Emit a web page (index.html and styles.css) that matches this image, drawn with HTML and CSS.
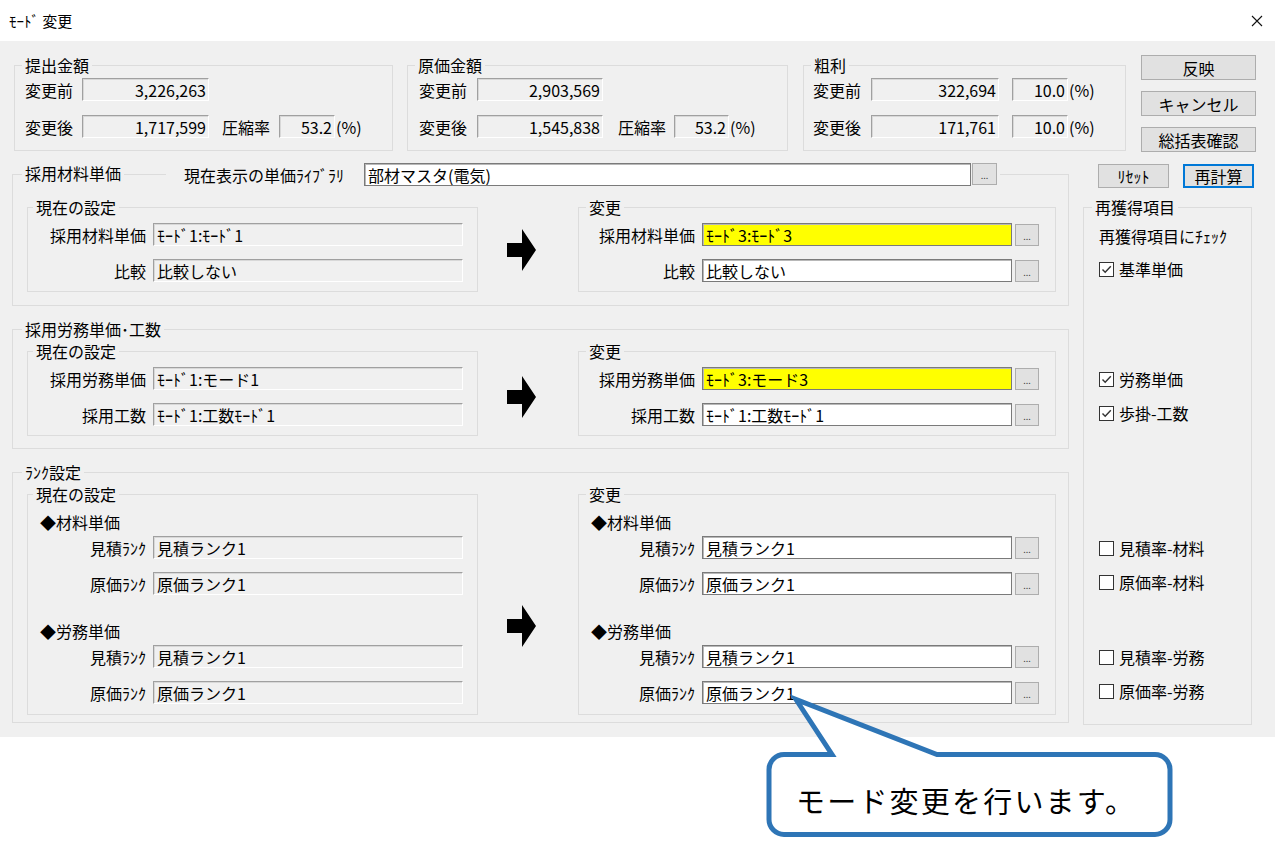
FILE: index.html
```html
<!DOCTYPE html>
<html lang="ja">
<head>
<meta charset="utf-8">
<title>ﾓｰﾄﾞ 変更</title>
<link rel="stylesheet" href="styles.css">
</head>
<body>
<div class="titlebar">
  <span class="title">ﾓｰﾄﾞ 変更</span>
  <svg class="close" width="12" height="12" viewBox="0 0 12 12"><path d="M1 1L11 11M11 1L1 11" stroke="#111" stroke-width="1.1" fill="none"/></svg>
</div>
<div class="dialog">
  <div class="top-row">
    <fieldset class="grp sum sum-1">
      <legend>提出金額</legend>
      <div class="sum-row"><span class="sum-lbl">変更前</span><span class="ro num amt">3,226,263</span></div>
      <div class="sum-row"><span class="sum-lbl">変更後</span><span class="ro num amt">1,717,599</span><span class="sum-lbl2">圧縮率</span><span class="ro num rate">53.2</span><span class="pct">(%)</span></div>
    </fieldset>
    <fieldset class="grp sum sum-2">
      <legend>原価金額</legend>
      <div class="sum-row"><span class="sum-lbl">変更前</span><span class="ro num amt">2,903,569</span></div>
      <div class="sum-row"><span class="sum-lbl">変更後</span><span class="ro num amt">1,545,838</span><span class="sum-lbl2">圧縮率</span><span class="ro num rate">53.2</span><span class="pct">(%)</span></div>
    </fieldset>
    <fieldset class="grp sum sum-3">
      <legend>粗利</legend>
      <div class="sum-row"><span class="sum-lbl">変更前</span><span class="ro num amt">322,694</span><span class="ro num rate sep">10.0</span><span class="pct">(%)</span></div>
      <div class="sum-row"><span class="sum-lbl">変更後</span><span class="ro num amt">171,761</span><span class="ro num rate sep">10.0</span><span class="pct">(%)</span></div>
    </fieldset>
    <div class="cmd-col">
      <button class="btn cmd">反映</button>
      <button class="btn cmd">キャンセル</button>
      <button class="btn cmd">総括表確認</button>
    </div>
  </div>

  <div class="main-row">
    <div class="left-col">
      <fieldset class="grp outer outer-a">
        <legend class="lib-legend"><div class="lib-bar">
          <span class="lg-title">採用材料単価</span>
          <span class="lg-line"></span>
          <span class="lib-lbl">現在表示の単価ﾗｲﾌﾞﾗﾘ</span>
          <span class="ed lib-field">部材マスタ(電気)</span>
          <span class="dots lib-dots">...</span>
        </div></legend>
        <div class="cmp">
          <fieldset class="grp cur">
            <legend>現在の設定</legend>
            <div class="frow"><span class="flbl">採用材料単価</span><span class="ro fld">ﾓｰﾄﾞ1:ﾓｰﾄﾞ1</span></div>
            <div class="frow"><span class="flbl">比較</span><span class="ro fld">比較しない</span></div>
          </fieldset>
          <div class="arrow-cell arrow-a"><svg class="arrow" width="30" height="43" viewBox="0 0 30 43"><path d="M0 14H15V0L29 21L15 42V28H0Z" fill="#000"/></svg></div>
          <fieldset class="grp chg">
            <legend>変更</legend>
            <div class="frow"><span class="flbl">採用材料単価</span><span class="ed fld yel">ﾓｰﾄﾞ3:ﾓｰﾄﾞ3</span><span class="dots">...</span></div>
            <div class="frow"><span class="flbl">比較</span><span class="ed fld">比較しない</span><span class="dots">...</span></div>
          </fieldset>
        </div>
      </fieldset>

      <fieldset class="grp outer outer-b">
        <legend>採用労務単価･工数</legend>
        <div class="cmp">
          <fieldset class="grp cur">
            <legend>現在の設定</legend>
            <div class="frow"><span class="flbl">採用労務単価</span><span class="ro fld">ﾓｰﾄﾞ1:モード1</span></div>
            <div class="frow"><span class="flbl">採用工数</span><span class="ro fld">ﾓｰﾄﾞ1:工数ﾓｰﾄﾞ1</span></div>
          </fieldset>
          <div class="arrow-cell arrow-b"><svg class="arrow" width="30" height="43" viewBox="0 0 30 43"><path d="M0 14H15V0L29 21L15 42V28H0Z" fill="#000"/></svg></div>
          <fieldset class="grp chg">
            <legend>変更</legend>
            <div class="frow"><span class="flbl">採用労務単価</span><span class="ed fld yel">ﾓｰﾄﾞ3:モード3</span><span class="dots">...</span></div>
            <div class="frow"><span class="flbl">採用工数</span><span class="ed fld">ﾓｰﾄﾞ1:工数ﾓｰﾄﾞ1</span><span class="dots">...</span></div>
          </fieldset>
        </div>
      </fieldset>

      <fieldset class="grp outer outer-c">
        <legend>ﾗﾝｸ設定</legend>
        <div class="cmp">
          <fieldset class="grp cur rank">
            <legend>現在の設定</legend>
            <div class="dia">◆材料単価</div>
            <div class="frow"><span class="flbl">見積ﾗﾝｸ</span><span class="ro fld">見積ランク1</span></div>
            <div class="frow"><span class="flbl">原価ﾗﾝｸ</span><span class="ro fld">原価ランク1</span></div>
            <div class="dia">◆労務単価</div>
            <div class="frow"><span class="flbl">見積ﾗﾝｸ</span><span class="ro fld">見積ランク1</span></div>
            <div class="frow"><span class="flbl">原価ﾗﾝｸ</span><span class="ro fld">原価ランク1</span></div>
          </fieldset>
          <div class="arrow-cell arrow-c"><svg class="arrow" width="30" height="43" viewBox="0 0 30 43"><path d="M0 14H15V0L29 21L15 42V28H0Z" fill="#000"/></svg></div>
          <fieldset class="grp chg rank">
            <legend>変更</legend>
            <div class="dia">◆材料単価</div>
            <div class="frow"><span class="flbl">見積ﾗﾝｸ</span><span class="ed fld">見積ランク1</span><span class="dots">...</span></div>
            <div class="frow"><span class="flbl">原価ﾗﾝｸ</span><span class="ed fld">原価ランク1</span><span class="dots">...</span></div>
            <div class="dia">◆労務単価</div>
            <div class="frow"><span class="flbl">見積ﾗﾝｸ</span><span class="ed fld">見積ランク1</span><span class="dots">...</span></div>
            <div class="frow"><span class="flbl">原価ﾗﾝｸ</span><span class="ed fld">原価ランク1</span><span class="dots">...</span></div>
          </fieldset>
        </div>
      </fieldset>
    </div>

    <div class="right-col">
      <div class="rc-btns">
        <button class="btn sm">ﾘｾｯﾄ</button>
        <button class="btn sm focus">再計算</button>
      </div>
      <fieldset class="grp reget">
        <legend>再獲得項目</legend>
        <div class="reget-note">再獲得項目にﾁｪｯｸ</div>
        <div class="chk c1"><span class="box"><svg width="13" height="13" viewBox="0 0 13 13"><path d="M2.5 6.5L5.2 9.3L10.8 3.2" stroke="#333" stroke-width="1.4" fill="none"/></svg></span>基準単価</div>
        <div class="chk c2"><span class="box"><svg width="13" height="13" viewBox="0 0 13 13"><path d="M2.5 6.5L5.2 9.3L10.8 3.2" stroke="#333" stroke-width="1.4" fill="none"/></svg></span>労務単価</div>
        <div class="chk c3"><span class="box"><svg width="13" height="13" viewBox="0 0 13 13"><path d="M2.5 6.5L5.2 9.3L10.8 3.2" stroke="#333" stroke-width="1.4" fill="none"/></svg></span>歩掛-工数</div>
        <div class="chk c4"><span class="box"></span>見積率-材料</div>
        <div class="chk c5"><span class="box"></span>原価率-材料</div>
        <div class="chk c6"><span class="box"></span>見積率-労務</div>
        <div class="chk c7"><span class="box"></span>原価率-労務</div>
      </fieldset>
    </div>
  </div>
</div>

<div class="callout">
  <svg class="callout-shape" width="420" height="152" viewBox="0 0 420 152"><path d="M24 64.5H72L36 9.5L177 64.5H395A15 15 0 0 1 410 79.5V129.5A15 15 0 0 1 395 144.5H24A15 15 0 0 1 9 129.5V79.5A15 15 0 0 1 24 64.5Z" fill="#fff" stroke="#2e75b6" stroke-width="5"/></svg>
  <div class="callout-text">モード変更を行います。</div>
</div>
</body>
</html>
```

FILE: styles.css
```css
* { box-sizing: border-box; }
html, body { margin: 0; padding: 0; }
body {
  width: 1277px;
  height: 843px;
  overflow: hidden;
  position: relative;
  background: #fff;
  color: #000;
  font-family: "Noto Sans CJK JP", "Noto Sans", sans-serif;
  font-size: 16px;
  line-height: 20px;
}

/* title bar */
.titlebar {
  height: 41px;
  display: flex;
  align-items: center;
  justify-content: space-between;
  padding: 0 14px 0 9px;
}
.title { font-size: 15px; }
.close { display: block; }

/* dialog */
.dialog {
  width: 1275px;
  height: 696px;
  background: #f0f0f0;
}
.top-row {
  display: flex;
  align-items: flex-start;
  height: 122px;
  padding: 14px 0 0 14px;
}

/* group boxes */
.grp {
  margin: 0;
  padding: 0;
  min-width: 0;
  border: 1px solid #dcdcdc;
}
.grp > legend {
  padding: 0 3px;
  line-height: 20px;
}

/* read-only & editable fields */
.ro {
  height: 23px;
  display: flex;
  align-items: center;
  padding: 0 3px;
  white-space: nowrap;
  overflow: hidden;
  background: #f0f0f0;
  border-style: solid;
  border-width: 1px;
  border-color: #a0a0a0 #ffffff #ffffff #a0a0a0;
  box-shadow: inset 1px 1px 0 #d8d8d8;
}
.num { justify-content: flex-end; padding-right: 2px; }
.ed {
  height: 23px;
  display: flex;
  align-items: center;
  padding: 0 3px;
  white-space: nowrap;
  overflow: hidden;
  background: #fff;
  border: 1px solid #7a7a7a;
  box-shadow: inset 1px 1px 0 #b8b8b8;
}
.yel { background: #ffff00; }
.dots {
  width: 24px;
  height: 22px;
  display: flex;
  align-items: flex-end;
  justify-content: center;
  padding-bottom: 4px;
  font-size: 9px;
  line-height: 9px;
  color: #444;
  background: #e1e1e1;
  border: 1px solid #adadad;
}

/* summary groups */
.sum { height: 96px; padding-top: 3px; margin-right: 14px; }
.sum > legend { margin-left: 7px; }
.sum-1 { width: 379px; }
.sum-2 { width: 381px; margin-right: 15px; }
.sum-3 { width: 323px; margin-right: 15px; }
.sum-row { display: flex; align-items: center; height: 23px; padding-left: 10px; }
.sum-2 .sum-row { padding-left: 11px; }
.sum-3 .sum-row { padding-left: 9px; }
.sum-row + .sum-row { margin-top: 14px; }
.sum-lbl { width: 57px; }
.sum-2 .sum-lbl, .sum-3 .sum-lbl { width: 58px; }
.amt { width: 127px; }
.sum-2 .amt { width: 126px; }
.sum-3 .amt { width: 128px; }
.sum-lbl2 { width: 57px; margin-left: 13px; }
.sum-2 .sum-lbl2 { width: 56px; margin-left: 15px; }
.rate { width: 56px; }
.sum-2 .rate { width: 55px; }
.rate.sep { margin-left: 13px; }
.pct { margin-left: 1px; white-space: nowrap; }

/* buttons */
.btn {
  font: inherit;
  font-size: 16px;
  line-height: 20px;
  color: #000;
  margin: 0;
  padding: 0;
  background: #e1e1e1;
  border: 1px solid #adadad;
}
.cmd-col {
  width: 115px;
  display: flex;
  flex-direction: column;
  gap: 11px;
}
.cmd { height: 25px; }

/* main area */
.main-row {
  display: flex;
  align-items: flex-start;
  padding-left: 12px;
}
.left-col {
  width: 1057px;
  display: flex;
  flex-direction: column;
  gap: 13px;
}
.outer > legend { margin-left: 9px; }
.outer-a { padding: 11px 0 13px 0; }
.outer-b { padding: 2px 0 12px 0; }
.outer-c { padding: 2px 0 7px 0; }

.lib-legend { padding: 0 3px; }
.lib-bar { display: flex; align-items: center; height: 23px; }
.lg-title { align-self: flex-start; line-height: 20px; padding-right: 3px; }
.lg-line { width: 42px; height: 1px; background: #dcdcdc; }
.lib-lbl { width: 198px; padding-left: 18px; white-space: nowrap; }
.lib-field { width: 607px; }
.lib-dots { width: 25px; margin-left: 1px; align-self: flex-start; }

.cmp { display: flex; align-items: flex-start; margin-left: 14px; }
.cur { width: 451px; padding: 6px 0 9px 0; }
.cur > legend { margin-left: 5px; }
.chg { width: 478px; padding: 6px 0 9px 0; }
.chg > legend { margin-left: 7px; }
.rank { padding-bottom: 10px; }

.frow { display: flex; align-items: center; height: 23px; }
.frow + .frow { margin-top: 13px; }
.flbl { text-align: right; padding-right: 7px; white-space: nowrap; }
.cur .flbl { width: 125px; }
.chg .flbl { width: 123px; }
.fld { width: 310px; }
.frow .dots { margin-left: 3px; }

.dia { height: 20px; padding-left: 12px; margin-top: 2px; }
.dia + .frow { margin-top: 4px; }
.frow + .dia { margin-top: 26px; }

.arrow-cell { width: 100px; padding-left: 29px; }
.arrow { display: block; }
.arrow-a { margin-top: 32px; }
.arrow-b { margin-top: 35px; }
.arrow-c { margin-top: 121px; }

/* right column */
.right-col { width: 173px; margin-left: 14px; }
.rc-btns { display: flex; gap: 14px; padding-left: 15px; margin-top: 1px; }
.sm { width: 71px; height: 24px; }
.focus { border: 2px solid #0078d7; }
.reget { width: 169px; height: 528px; margin-top: 9px; padding-top: 9px; }
.reget > legend { margin-left: 8px; }
.reget-note { padding-left: 15px; white-space: nowrap; }
.chk { display: flex; align-items: center; height: 20px; padding-left: 15px; white-space: nowrap; }
.box {
  width: 15px;
  height: 15px;
  margin-right: 5px;
  border: 1px solid #333;
  background: #fff;
  display: flex;
  align-items: center;
  justify-content: center;
}
.box svg { display: block; }
.c1 { margin-top: 13px; }
.c2 { margin-top: 90px; }
.c3 { margin-top: 14px; }
.c4 { margin-top: 115px; }
.c5 { margin-top: 14px; }
.c6 { margin-top: 55px; }
.c7 { margin-top: 14px; }

/* callout */
.callout {
  position: absolute;
  left: 760px;
  top: 690px;
  width: 420px;
  height: 152px;
}
.callout-shape { position: absolute; left: 0; top: 0; }
.callout-text {
  position: absolute;
  left: 36px;
  top: 90px;
  font-size: 29px;
  line-height: 40px;
  letter-spacing: 2.2px;
  white-space: nowrap;
}
```
